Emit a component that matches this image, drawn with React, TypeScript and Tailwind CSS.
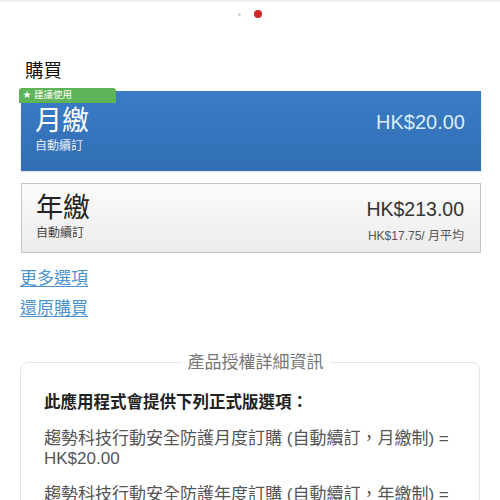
export default function App() {
  const font = { fontFamily: '"Liberation Sans", "Noto Sans CJK TC", sans-serif' };

  return (
    <div className="w-[500px] h-[500px] overflow-hidden bg-white text-[#222]" style={font}>
      {/* top fade + page dots */}
      <div className="h-[3px] bg-gradient-to-b from-[#e9e9ef] to-white" />
      <div className="flex items-center justify-center gap-[13px] mt-[7px] h-[8px]">
        <div className="w-[3px] h-[3px] rounded-full bg-[#cfcfd4]" />
        <div className="w-[8px] h-[8px] rounded-full bg-[#d0262c]" />
      </div>

      <div className="pl-[20px] pr-[19px]">
        <h1 className="mt-[44px] ml-[5px] text-[18.5px] leading-none font-normal text-[#111]">購買</h1>

        {/* monthly plan */}
        <div className="relative ml-[1px] mt-[10px] h-[80px] flex justify-between items-start pt-[17px] pl-[14px] pr-[16px] bg-gradient-to-b from-[#3a7cc6] to-[#316eb4] shadow-[0_1px_2px_rgba(0,0,0,0.15)]">
          <div className="absolute -left-[2px] -top-[3px] h-[15px] w-[97px] rounded-t-[3px] bg-[#5fb45a] flex items-center pl-[4px] text-[9.5px] leading-none text-white">
            <span className="text-[8px] mr-[3px]">★</span>建議使用
          </div>
          <div className="flex flex-col text-white">
            <span className="text-[27px] leading-none">月繳</span>
            <span className="mt-[5px] text-[12px] leading-none text-[#e4eef9]">自動續訂</span>
          </div>
          <div className="mt-[4px] text-[20px] leading-none text-[#d8edfb]">HK$20.00</div>
        </div>

        {/* yearly plan */}
        <div className="ml-[1px] mt-[12px] h-[70px] flex justify-between items-start pt-[11px] pl-[14px] pr-[16px] border border-[#c6c6c6] bg-gradient-to-b from-[#fbfbfb] to-[#ececec]">
          <div className="flex flex-col">
            <span className="text-[27px] leading-none text-[#222]">年繳</span>
            <span className="mt-[5px] text-[12px] leading-none text-[#444]">自動續訂</span>
          </div>
          <div className="flex flex-col items-end mt-[5px]">
            <span className="text-[19.5px] leading-none text-[#333]">HK$213.00</span>
            <span className="mt-[11px] text-[12px] leading-none text-[#555]">HK$17.75/ 月平均</span>
          </div>
        </div>

        {/* links */}
        <div className="flex flex-col items-start">
          <a className="mt-[17px] text-[17px] leading-none text-[#4a93d0] underline underline-offset-2">更多選項</a>
          <a className="mt-[13px] text-[17px] leading-none text-[#4a93d0] underline underline-offset-2">還原購買</a>
        </div>

        {/* license details */}
        <fieldset className="mt-[37px] w-[460px] border border-[#e6e6e6] rounded-[8px] pl-[23px] pr-[12px] pt-[21px] pb-[20px]">
          <legend className="mx-auto px-[6px] text-[17px] leading-none text-[#777]">產品授權詳細資訊</legend>
          <p className="text-[16.5px] leading-[20px] font-bold text-[#222]">此應用程式會提供下列正式版選項：</p>
          <p className="mt-[17px] text-[17px] leading-[20px] text-[#555]">
            趨勢科技行動安全防護月度訂購 (自動續訂，月繳制) = HK$20.00
          </p>
          <p className="mt-[16px] text-[17px] leading-[20px] text-[#555]">
            趨勢科技行動安全防護年度訂購 (自動續訂，年繳制) = HK$213.00
          </p>
        </fieldset>
      </div>
    </div>
  );
}
